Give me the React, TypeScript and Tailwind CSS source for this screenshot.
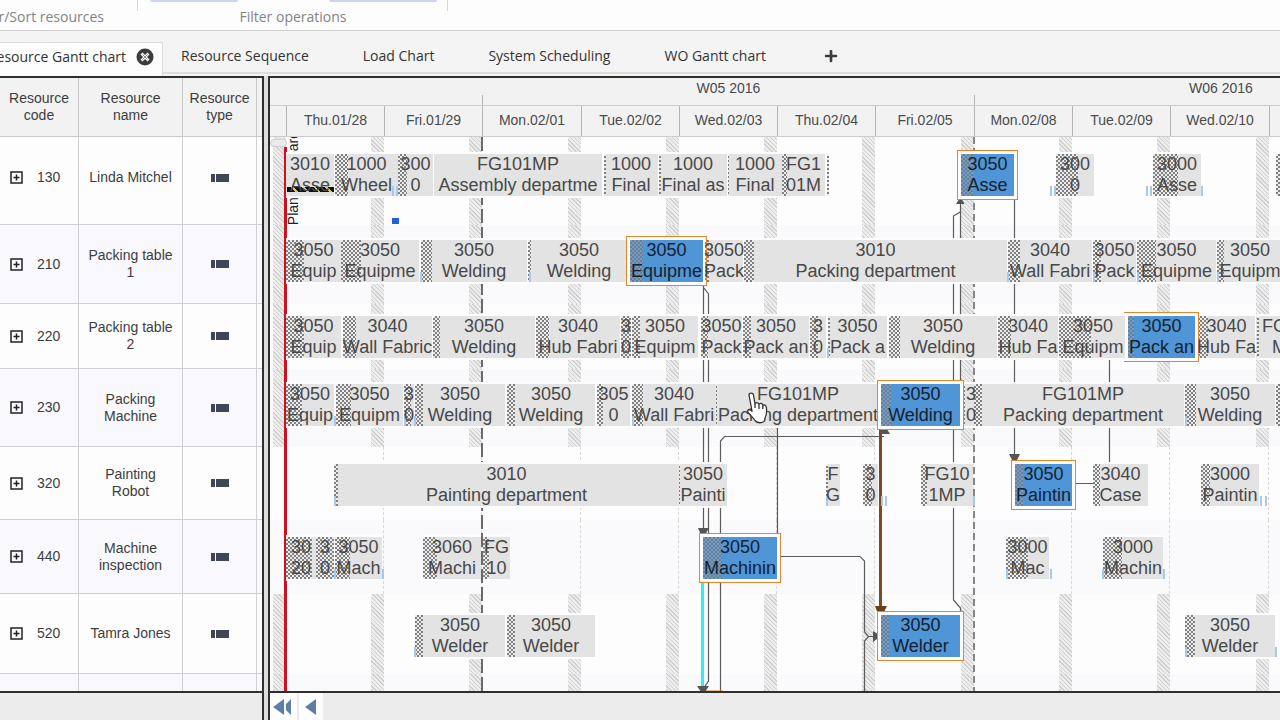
import { FaPlus } from 'react-icons/fa';

type Bar = {
  from: number;
  to: number;
  setup?: number; // width of the hatched setup part
  code?: string;
  label?: string;
  selected?: boolean;
  openLeft?: boolean;
};

type Resource = {
  code: string;
  name: string;
  height: string;
  pad: string;
  shifts: boolean; // show the hatched off-shift bands
  bars: Bar[];
  ticks?: number[];
};

// Plan positions count from the window edge, the chart starts after the grid pane
const CHART_LEFT = 270;
const CHART_TOP = 137;

const days = [
  'Thu.01/28', 'Fri.01/29', 'Mon.02/01', 'Tue.02/02', 'Wed.02/03',
  'Thu.02/04', 'Fri.02/05', 'Mon.02/08', 'Tue.02/09', 'Wed.02/10',
];
const dayStarts = [286, 384, 482, 581, 679, 777, 875, 974, 1072, 1170, 1269];

const resources: Resource[] = [
  {
    code: '130', name: 'Linda Mitchel', height: 'h-[88px]', pad: 'pt-[17px]', shifts: true,
    bars: [
      { from: 286, to: 334, code: '3010', label: 'Asse' },
      { from: 335, to: 398, setup: 13, code: '1000', label: 'Wheel' },
      { from: 398, to: 433, setup: 9, code: '300', label: '0' },
      { from: 434, to: 602, code: 'FG101MP', label: 'Assembly departme' },
      { from: 604, to: 658, setup: 2, code: '1000', label: 'Final' },
      { from: 659, to: 727, setup: 2, code: '1000', label: 'Final as' },
      { from: 728, to: 782, setup: 1, code: '1000', label: 'Final' },
      { from: 782, to: 825, setup: 5, code: 'FG1', label: '01M' },
      { from: 827, to: 829, setup: 2 },
      { from: 961, to: 1014, setup: 12, code: '3050', label: 'Asse', selected: true },
      { from: 1056, to: 1094, setup: 22, code: '300', label: '0' },
      { from: 1153, to: 1201, setup: 25, code: '3000', label: 'Asse' },
      { from: 1276, to: 1330, setup: 14 },
    ],
    ticks: [392, 396, 1050, 1054, 1146, 1150, 1201],
  },
  {
    code: '210', name: 'Packing table 1', height: 'h-[79px]', pad: 'pt-[15px]', shifts: true,
    bars: [
      { from: 286, to: 341, setup: 18, code: '3050', label: 'Equip' },
      { from: 341, to: 419, setup: 20, code: '3050', label: 'Equipme' },
      { from: 421, to: 527, setup: 11, code: '3050', label: 'Welding' },
      { from: 528, to: 630, setup: 3, code: '3050', label: 'Welding' },
      { from: 630, to: 703, setup: 13, code: '3050', label: 'Equipme', selected: true },
      { from: 705, to: 743, setup: 4, code: '3050', label: 'Pack' },
      { from: 744, to: 1007, setup: 10, code: '3010', label: 'Packing department' },
      { from: 1008, to: 1092, setup: 12, code: '3040', label: 'Wall Fabri' },
      { from: 1093, to: 1136, setup: 8, code: '3050', label: 'Pack' },
      { from: 1137, to: 1216, setup: 19, code: '3050', label: 'Equipme' },
      { from: 1217, to: 1283, setup: 7, code: '3050', label: 'Equipm' },
    ],
    ticks: [420, 529, 1007, 1093, 1137, 1217],
  },
  {
    code: '220', name: 'Packing table 2', height: 'h-[65px]', pad: 'pt-[12px]', shifts: true,
    bars: [
      { from: 286, to: 341, setup: 18, code: '3050', label: 'Equip' },
      { from: 343, to: 432, setup: 13, code: '3040', label: 'Wall Fabric' },
      { from: 433, to: 535, setup: 7, code: '3050', label: 'Welding' },
      { from: 536, to: 620, setup: 13, code: '3040', label: 'Hub Fabri' },
      { from: 621, to: 631, setup: 10, code: '3', label: '0' },
      { from: 632, to: 698, setup: 8, code: '3050', label: 'Equipm' },
      { from: 701, to: 742, setup: 7, code: '3050', label: 'Pack' },
      { from: 743, to: 809, setup: 8, code: '3050', label: 'Pack an' },
      { from: 810, to: 826, setup: 8, code: '3', label: '0' },
      { from: 828, to: 887, setup: 2, code: '3050', label: 'Pack a' },
      { from: 889, to: 997, setup: 11, code: '3050', label: 'Welding' },
      { from: 998, to: 1058, setup: 13, code: '3040', label: 'Hub Fa' },
      { from: 1059, to: 1127, setup: 32, code: '3050', label: 'Equipm' },
      { from: 1128, to: 1195, setup: 6, code: '3050', label: 'Pack an', selected: true, openLeft: true },
      { from: 1198, to: 1255, setup: 10, code: '3040', label: 'Hub Fa' },
      { from: 1257, to: 1302, setup: 2, code: 'FG1', label: 'M' },
    ],
    ticks: [827],
  },
  {
    code: '230', name: 'Packing Machine', height: 'h-[78px]', pad: 'pt-[15px]', shifts: true,
    bars: [
      { from: 286, to: 334, setup: 16, code: '3050', label: 'Equip' },
      { from: 336, to: 403, setup: 15, code: '3050', label: 'Equipm' },
      { from: 404, to: 414, setup: 7, code: '3', label: '0' },
      { from: 415, to: 505, setup: 8, code: '3050', label: 'Welding' },
      { from: 507, to: 595, setup: 8, code: '3050', label: 'Welding' },
      { from: 597, to: 630, setup: 6, code: '305', label: '0' },
      { from: 632, to: 716, setup: 11, code: '3040', label: 'Wall Fabri' },
      { from: 716, to: 880, setup: 1, code: 'FG101MP', label: 'Packing department' },
      { from: 881, to: 960, setup: 10, code: '3050', label: 'Welding', selected: true },
      { from: 963, to: 979, setup: 2, code: '3', label: '0' },
      { from: 974, to: 982, setup: 8 },
      { from: 982, to: 1184, code: 'FG101MP', label: 'Packing department' },
      { from: 1185, to: 1275, setup: 11, code: '3050', label: 'Welding' },
      { from: 1276, to: 1330, setup: 14 },
    ],
    ticks: [334, 404, 414, 632, 1185],
  },
  {
    code: '320', name: 'Painting Robot', height: 'h-[73px]', pad: 'pt-[17px]', shifts: false,
    bars: [
      { from: 334, to: 679, setup: 4, code: '3010', label: 'Painting department' },
      { from: 679, to: 727, setup: 1, code: '3050', label: 'Painti' },
      { from: 826, to: 840, setup: 2, code: 'F', label: 'G' },
      { from: 863, to: 878, setup: 9, code: '3', label: '0' },
      { from: 921, to: 973, setup: 6, code: 'FG10', label: '1MP' },
      { from: 1015, to: 1072, setup: 8, code: '3050', label: 'Paintin', selected: true },
      { from: 1093, to: 1148, setup: 7, code: '3040', label: 'Case' },
      { from: 1201, to: 1259, setup: 9, code: '3000', label: 'Paintin' },
    ],
    ticks: [334, 826, 881, 885, 973, 1260, 1265],
  },
  {
    code: '440', name: 'Machine inspection', height: 'h-[74px]', pad: 'pt-[17px]', shifts: false,
    bars: [
      { from: 286, to: 316, setup: 26, code: '30', label: '20' },
      { from: 316, to: 334, setup: 18, code: '3', label: '0' },
      { from: 335, to: 382, setup: 15, code: '3050', label: 'Mach' },
      { from: 423, to: 481, setup: 14, code: '3060', label: 'Machi' },
      { from: 483, to: 510, setup: 6, code: 'FG', label: '10' },
      { from: 703, to: 777, setup: 19, code: '3050', label: 'Machinin', selected: true },
      { from: 1006, to: 1049, setup: 22, code: '3000', label: 'Mac' },
      { from: 1103, to: 1163, setup: 19, code: '3000', label: 'Machin' },
    ],
    ticks: [334, 382, 1006, 1050, 1102, 1163],
  },
  {
    code: '520', name: 'Tamra Jones', height: 'h-[80px]', pad: 'pt-[21px]', shifts: true,
    bars: [
      { from: 415, to: 505, setup: 8, code: '3050', label: 'Welder' },
      { from: 507, to: 595, setup: 8, code: '3050', label: 'Welder' },
      { from: 881, to: 960, setup: 8, code: '3050', label: 'Welder', selected: true },
      { from: 1185, to: 1275, setup: 10, code: '3050', label: 'Welder' },
    ],
    ticks: [414, 1185, 1275],
  },
  { code: '', name: '', height: 'h-[80px]', pad: 'pt-[21px]', shifts: true, bars: [] },
];

function Ribbon() {
  return (
    <div className="flex h-[30px] shrink-0 bg-[#fdfdfd] text-sm text-[#848484]">
      <div className="flex w-[138px] flex-col">
        <div className="h-[11px] border-r border-[#d8d8d8]" />
        <div className="flex w-[104px] justify-end leading-[12px]">
          <span className="whitespace-nowrap">Filter/Sort resources</span>
        </div>
      </div>
      <div className="flex w-[310px] flex-col">
        <div className="flex h-[11px] justify-between border-r border-[#d8d8d8] pl-3 pr-2.5">
          <div className="h-0.5 w-[88px] rounded-b bg-[#ccd5ee]" />
          <div className="h-0.5 w-[108px] rounded-b bg-[#ccd5ee]" />
        </div>
        <div className="text-center leading-[12px]">Filter operations</div>
      </div>
    </div>
  );
}

function Tabs() {
  return (
    <nav className="flex h-[46px] shrink-0 items-end border-t border-[#cfcfcf] bg-[#f4f4f4] text-sm text-[#333]">
      <div className="flex h-[34px] w-[163px] items-center justify-end gap-2.5 border-r border-t border-[#dcdcdc] bg-[#fdfdfd] pb-1.5 pr-2">
        <button className="shrink-0 whitespace-nowrap">Resource Gantt chart</button>
        <button aria-label="Close tab" className="shrink-0">
          <svg viewBox="0 0 18 18" className="size-[18px]">
            <circle cx="9" cy="9" r="8.500" fill="#3c3c3c" />
            <path d="M5.500 5.500l7 7M12.500 5.500l-7 7" stroke="#fff" strokeWidth="2.800" />
            <path d="M6.500 6.500l5 5M11.500 6.500l-5 5" stroke="#3c3c3c" strokeWidth=".6" />
          </svg>
        </button>
      </div>
      <div className="mb-0.5 flex h-8 flex-1 items-center gap-[54px] border-b-2 border-[#dcdcdc] pb-0.5 pl-[18px]">
        <button>Resource Sequence</button>
        <button>Load Chart</button>
        <button>System Scheduling</button>
        <button>WO Gantt chart</button>
        <button aria-label="Add tab" className="pl-1">
          <FaPlus className="size-3.5 text-[#3c3c3c]" />
        </button>
      </div>
    </nav>
  );
}

function ResourceGrid() {
  return (
    <div className="w-[264px] shrink-0 overflow-hidden border-b-2 border-r-2 border-t-2 border-[#2e302e]">
      <table className="w-full table-fixed border-separate border-spacing-0 text-center text-sm leading-[17px] text-[#3d3d3d]">
        <thead>
          <tr className="h-[59px] bg-[#f2f2f2]">
            <th className="w-[79px] border-b border-r border-[#c9c9c9] px-2 font-normal">Resource code</th>
            <th className="w-[104px] border-b border-r border-[#c9c9c9] px-4 font-normal">Resource name</th>
            <th className="w-[74px] border-b border-r border-[#c9c9c9] font-normal">Resource type</th>
            <th aria-hidden="true" className="border-b border-[#c9c9c9]" />
          </tr>
        </thead>
        <tbody>
          {resources.map((r) => (
            <tr key={r.code} className={`${r.height} group odd:bg-[#fdfdfd] even:bg-[#f8f8fd]`}>
              <td className="border-b border-r border-[#cfcfd4] p-0 group-first:pb-1.5">
                {r.code && (
                  <div className="flex items-center gap-3.5 pl-2.5">
                    <button aria-label={`Expand ${r.code}`}>
                      <svg viewBox="0 0 13 13" className="size-[13px]" fill="none" stroke="#222" strokeWidth="1.500">
                        <path d="M1 1h11v11H1zM6.500 3.500v6M3.500 6.500h6" />
                      </svg>
                    </button>
                    {r.code}
                  </div>
                )}
              </td>
              <td className="border-b border-r border-[#cfcfd4] px-1.5 py-0 group-first:pb-1.5">{r.name}</td>
              <td className="border-b border-r border-[#cfcfd4] p-0 group-first:pb-1.5">
                {r.code && (
                  <svg viewBox="0 0 18 8" className="mx-auto h-2 w-[18px]" fill="#3f4656">
                    <path d="M0 0h4v8H0zM5 0h13v8H5z" />
                  </svg>
                )}
              </td>
              <td className="border-b border-[#cfcfd4]" />
            </tr>
          ))}
        </tbody>
      </table>
    </div>
  );
}

function TimeHeader() {
  return (
    <div className="bg-[#f2f2f2] text-sm text-[#4a4a4a]">
      <div className="flex h-7 border-b border-[#cdcdcd] leading-[20px]">
        <div className="flex w-[213px] shrink-0 items-end justify-end">
          <div className="h-2.5 w-px bg-[#b5b5b5]" />
        </div>
        <div className="flex w-[492px] shrink-0 items-end">
          <div className="h-[27px] flex-1 text-center">W05 2016</div>
          <div className="h-2.5 w-px bg-[#b5b5b5]" />
        </div>
        <div className="w-[492px] shrink-0 text-center">W06 2016</div>
      </div>
      <div className="flex h-[31px] border-b border-[#cdcdcd] leading-[28px]">
        <div className="w-[17px] shrink-0 border-r border-[#b5b5b5]" />
        {days.map((d, i) => (
          <div
            key={d}
            className="shrink-0 border-r border-[#b5b5b5] text-center"
            style={{ width: dayStarts[i + 1] - dayStarts[i] }}
          >
            {d}
          </div>
        ))}
      </div>
    </div>
  );
}

function TaskBar({ bar }: { bar: Bar }) {
  return (
    <div
      className={
        bar.selected
          ? 'absolute inset-y-0 flex justify-center bg-[#5095d6] text-[#14222f] outline-3 outline-[#fdfdfd]'
          : 'absolute inset-y-0 flex justify-center bg-[#e3e3e3] text-[#484848] shadow-[0_2px_0_#fdfdfd,0_-2px_0_#fdfdfd]'
      }
      style={{ left: bar.from - CHART_LEFT, width: bar.to - bar.from }}
    >
      {bar.selected && (
        <div
          className={
            bar.openLeft
              ? 'absolute -inset-1 z-10 border border-l-0 border-[#e8842a]'
              : 'absolute -inset-1 z-10 border border-[#e8842a]'
          }
        />
      )}
      {bar.setup && (
        <div
          className={
            bar.selected
              ? 'absolute inset-y-0 left-0 bg-[#739dc6] bg-[repeating-conic-gradient(#687f96_0_25%,transparent_0_50%)] bg-[size:4px_4px]'
              : 'absolute inset-y-0 left-0 bg-[#ececec] bg-[repeating-conic-gradient(#808080_0_25%,transparent_0_50%)] bg-[size:4px_4px]'
          }
          style={{ width: bar.setup }}
        />
      )}
      {bar.code && (
        <div className="relative z-10 shrink-0 whitespace-nowrap text-center text-lg leading-[21px]">
          {bar.code}
          <br />
          {bar.label}
        </div>
      )}
    </div>
  );
}

function Links() {
  return (
    <svg className="absolute inset-0 size-full" fill="none">
      <g transform={`translate(${-CHART_LEFT} ${-CHART_TOP})`}>
        {/* Week borders */}
        <path d="M482 137V693" stroke="#6a6a6a" strokeWidth="2" strokeDasharray="14 4" />
        <path d="M974 137V693" stroke="#868686" strokeWidth="2" strokeDasharray="7 4" />

        <g stroke="#5c5c5c" strokeWidth="1.200">
          <path d="M703.500 284V532M704 288l4.500 6V681l-4 6" />
          <path d="M720.500 693V441l4-4.500H884" />
          <path d="M777.500 424V533M781 556.500H860l4.500 4.500V632l4 4.500H876M864.500 693V641l4-4.500" />
          <path d="M960.500 383V204M960 212l-6.500 4V600l7 8V613" />
          <path d="M1014.500 198V458M1109.500 359V464M1076 483.500H1093" />
        </g>
        <path d="M880.500 428V610" stroke="#7b4a20" strokeWidth="3" />
        <path d="M702.500 581V688" stroke="#2beff2" strokeWidth="3" />
        <path d="M704 691.500H723" stroke="#d9822b" strokeWidth="2" />

        <g fill="#555">
          <path d="M698 528h11l-4 7h-4zM1009 454h11l-3 6h-5zM697 686h12l-4 6h-4z" />
          <path d="M956 204l4.500-7 4 7zM879 434l6-8 5 8zM873 631l8 5-8 6z" />
          <path d="M875 606h12l-4 8h-5z" fill="#6a3f1b" />
        </g>
      </g>
    </svg>
  );
}

function Pointer() {
  return (
    <svg viewBox="0 0 24 34" className="absolute left-[475px] top-[255px] z-30 h-[34px] w-6" fill="#fff" stroke="#333" strokeWidth="1.300" strokeLinejoin="round">
      <path d="M4 3C4 .5 8 .5 8.500 3l1.500 9c.5-2 3.500-2 4 .5.8-1.800 3.500-1.300 3.800 1 1-1.200 3.200-.5 3.500 1.500.6 4 .5 8-1.500 11.500V28.500c-2 3-7.500 3-9.800 0C8.500 26 6 24 3.500 21c-2-2.600.2-4.500 2.500-2.800l1 1z" />
      <path d="M10 12v4M14 13v4M17.800 14v3" />
    </svg>
  );
}

function Chart() {
  return (
    <div className="min-w-0 flex-1 overflow-hidden border-b-2 border-l-2 border-t-2 border-[#2e302e]">
      <TimeHeader />
      <div className="relative overflow-hidden">
        {resources.map((r) => (
          <div key={r.code} className={`${r.height} relative odd:bg-[#fdfdfd] even:bg-[#fafafd]`}>
            {dayStarts.map((x) =>
              r.shifts ? (
                <div
                  key={x}
                  className="absolute inset-y-0 w-[13px] bg-[repeating-linear-gradient(45deg,#d0d0d0_0_1px,#ededed_1px_3px)]"
                  style={{ left: x - 13 - CHART_LEFT }}
                />
              ) : (
                <div
                  key={x}
                  className="absolute inset-y-0 border-l border-dashed border-[#d9d9d9]"
                  style={{ left: x - 1 - CHART_LEFT }}
                />
              ),
            )}
          </div>
        ))}

        <Links />
        {/* Current time */}
        <div className="absolute bottom-0 left-[14px] top-2.5 w-[3px] bg-[#cf1020]" />
        <div className="absolute -top-1.5 left-[16px] rotate-180 whitespace-nowrap text-sm leading-[14px] text-[#222] [writing-mode:vertical-rl]">
          Planning board
        </div>
        <div className="absolute left-0 top-0.5 h-2 w-[17px] rounded-sm border border-[#cfcfcf] bg-[#ececec]" />

        <div className="absolute inset-x-0 top-0">
          {resources.map((r) => (
            <div key={r.code} className={`${r.height} ${r.pad}`}>
              <div className="relative h-[42px]">
                {r.bars.map((b) => (
                  <TaskBar key={b.from} bar={b} />
                ))}
                {r.ticks?.map((x) => (
                  <div
                    key={x}
                    className="absolute bottom-0 h-2.5 w-0.5 bg-[#a9c8f0]"
                    style={{ left: x - CHART_LEFT }}
                  />
                ))}
              </div>
            </div>
          ))}
        </div>

        {/* Late order marker and the free operation under it */}
        <div className="absolute left-[17px] top-[50px] h-[5px] w-[47px] bg-[repeating-linear-gradient(45deg,#111_0_6px,#e0c95a_6px_8px)]" />
        <div className="absolute left-[122px] top-[81px] h-1.5 w-[7px] bg-[#1f62d8]" />
        <Pointer />
      </div>
    </div>
  );
}

export default function App() {
  return (
    <div className="flex h-screen flex-col overflow-hidden bg-[#ececec] font-['Open_Sans','Noto_Sans',sans-serif]">
      <Ribbon />
      <Tabs />

      <main className="flex min-h-0 flex-1 font-['Liberation_Sans',Arial,sans-serif]">
        <ResourceGrid />
        <div className="w-1 shrink-0 bg-[#dedede]" />
        <Chart />
      </main>

      <footer className="flex h-[27px] shrink-0">
        <div className="w-[264px] shrink-0 border-r-2 border-[#2e302e]" />
        <div className="w-1 shrink-0 bg-[#dedede]" />
        <div className="flex flex-1 gap-0.5 border-l-2 border-[#2e302e]">
          <button aria-label="First page" className="flex w-[27px] items-center bg-[#fdfdfd] pl-[3px]">
            <svg viewBox="0 0 18 16" className="h-4 w-[18px]" fill="#5b7fa8">
              <path d="M11 0v16L0 8zM18 0v16l-5-5V5z" />
            </svg>
          </button>
          <button aria-label="Previous page" className="flex w-6 items-center bg-[#fdfdfd] pl-1.5">
            <svg viewBox="0 0 11 16" className="h-4 w-[11px]" fill="#5b7fa8">
              <path d="M11 0v16L0 8z" />
            </svg>
          </button>
        </div>
      </footer>
    </div>
  );
}
